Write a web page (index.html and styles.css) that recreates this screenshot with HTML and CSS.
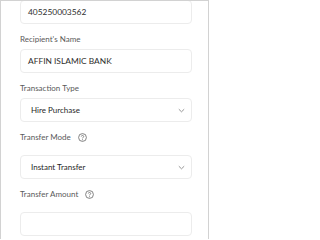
FILE: index.html
```html
<!DOCTYPE html>
<html>
<head>
<meta charset="utf-8">
<link rel="stylesheet" href="styles.css">
</head>
<body>
<div class="card">
  <div class="field first">
    <div class="box input">405250003562</div>
  </div>
  <div class="field">
    <div class="label">Recipient's Name</div>
    <div class="box input">AFFIN ISLAMIC BANK</div>
  </div>
  <div class="field">
    <div class="label">Transaction Type</div>
    <div class="box select"><span>Hire Purchase</span>
      <svg class="chev" width="7" height="5" viewBox="0 0 7 5"><path d="M0.8 1.2 L3.5 3.8 L6.2 1.2" fill="none" stroke="#8a8a8a" stroke-width="0.9"/></svg>
    </div>
  </div>
  <div class="field">
    <div class="label help">Transfer Mode
      <svg class="q" width="9" height="9" viewBox="0 0 9 9"><circle cx="4.5" cy="4.5" r="3.9" fill="none" stroke="#666" stroke-width="0.8"/><path d="M3.3 3.5 C3.3 2.1 5.7 2.1 5.7 3.5 C5.7 4.4 4.5 4.4 4.5 5.4" fill="none" stroke="#666" stroke-width="0.8"/><circle cx="4.5" cy="6.7" r="0.5" fill="#666"/></svg>
    </div>
    <div class="box select"><span>Instant Transfer</span>
      <svg class="chev" width="7" height="5" viewBox="0 0 7 5"><path d="M0.8 1.2 L3.5 3.8 L6.2 1.2" fill="none" stroke="#8a8a8a" stroke-width="0.9"/></svg>
    </div>
  </div>
  <div class="field">
    <div class="label help">Transfer Amount
      <svg class="q" width="9" height="9" viewBox="0 0 9 9"><circle cx="4.5" cy="4.5" r="3.9" fill="none" stroke="#666" stroke-width="0.8"/><path d="M3.3 3.5 C3.3 2.1 5.7 2.1 5.7 3.5 C5.7 4.4 4.5 4.4 4.5 5.4" fill="none" stroke="#666" stroke-width="0.8"/><circle cx="4.5" cy="6.7" r="0.5" fill="#666"/></svg>
    </div>
    <div class="box input"></div>
  </div>
</div>
</body>
</html>
```
FILE: styles.css
```css
html, body {
  margin: 0;
  padding: 0;
  background: #ffffff;
}
body {
  width: 211px;
  height: 239px;
  overflow: hidden;
  font-family: Lato, "Open Sans", sans-serif;
}
.card {
  box-sizing: border-box;
  width: 209px;
  height: 239px;
  overflow: hidden;
  border: 1px solid #d2d2d2;
  border-bottom: none;
  padding: 0 0 0 19px;
}
.field {
  display: flex;
  flex-direction: column;
}
.first {
  margin-top: -1px;
}
.label {
  font-size: 8px;
  line-height: 12px;
  color: #5a5a5a;
  margin-top: 9px;
  margin-bottom: 4px;
  display: flex;
  align-items: center;
  gap: 7px;
}
.label.help {
  margin-bottom: 12px;
}
.box {
  box-sizing: border-box;
  width: 172px;
  height: 24px;
  border: 1px solid #ececec;
  border-radius: 4px;
  font-size: 8.4px;
  color: #2e2e2e;
  display: flex;
  align-items: center;
}
.input {
  padding-left: 7px;
}
.select {
  padding-left: 10px;
  padding-right: 6px;
  justify-content: space-between;
  font-size: 8px;
  color: #1f1f1f;
}
.chev {
  display: block;
}
.q {
  display: block;
}
```
